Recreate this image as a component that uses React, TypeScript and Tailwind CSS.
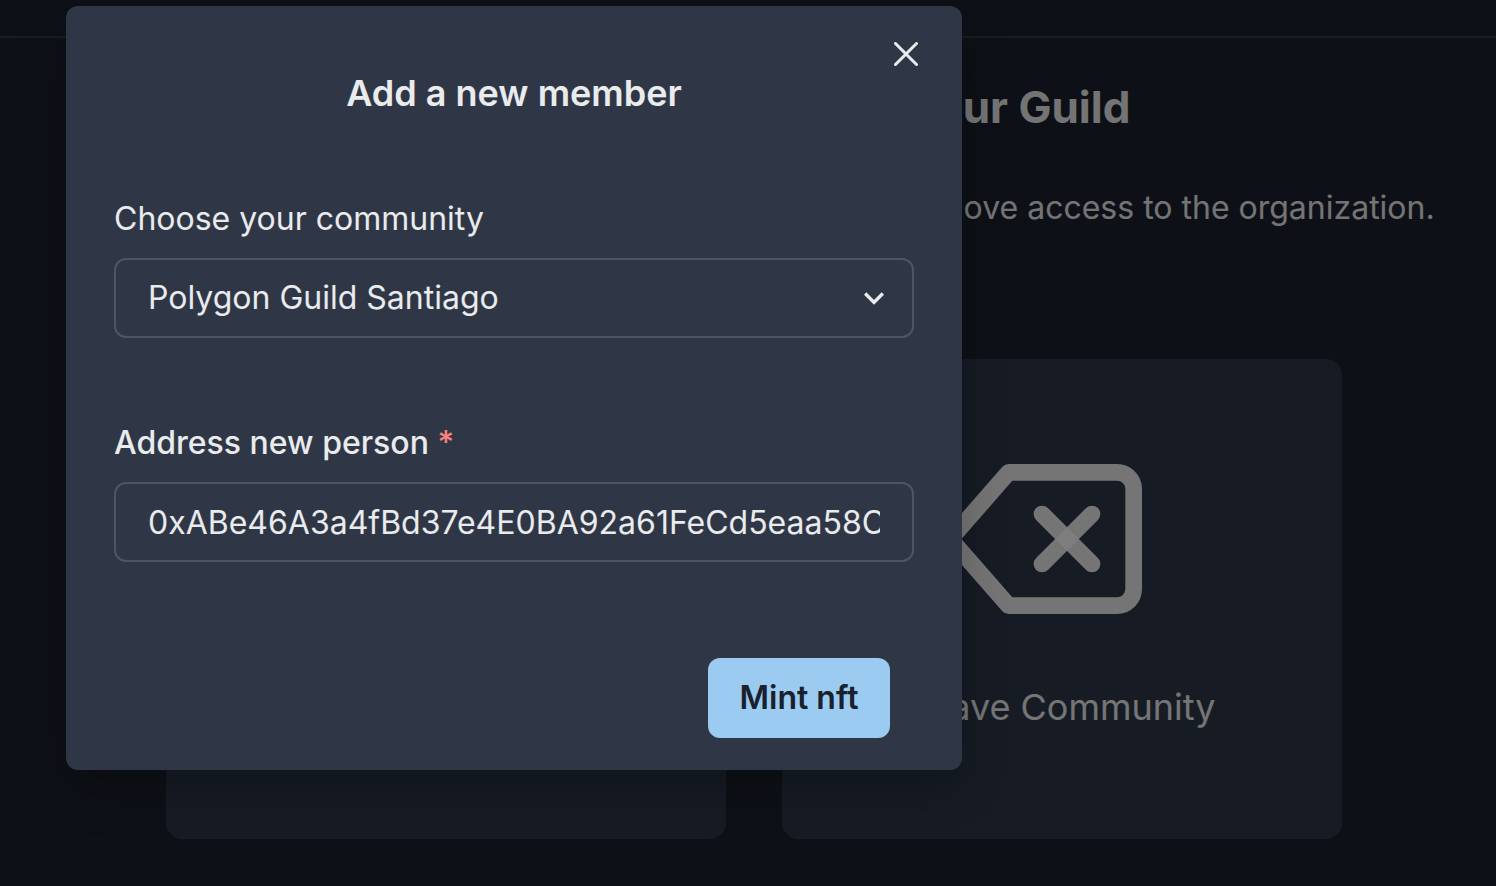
import React from 'react'
import { FiDelete, FiUserPlus } from 'react-icons/fi'

const CloseIcon = () => (
  <svg viewBox="0 0 24 24" className="h-6 w-6" fill="currentColor">
    <path d="M.439,21.44a1.5,1.5,0,0,0,2.122,2.121L11.823,14.3a.25.25,0,0,1,.354,0l9.262,9.263a1.5,1.5,0,1,0,2.122-2.121L14.3,12.177a.25.25,0,0,1,0-.354l9.263-9.262A1.5,1.5,0,0,0,21.439.44L12.177,9.7a.25.25,0,0,1-.354,0L2.561.44A1.5,1.5,0,0,0,.439,2.561L9.7,11.823a.25.25,0,0,1,0,.354Z" />
  </svg>
)

const ChevronIcon = () => (
  <svg viewBox="0 0 24 24" className="h-10 w-10" fill="currentColor">
    <path d="M16.59 8.59L12 13.17 7.41 8.59 6 10l6 6 6-6z" />
  </svg>
)

const ActionCard = ({ icon, label }: { icon: React.ReactNode; label: string }) => (
  <div className="flex h-[480px] w-[560px] flex-col items-center rounded-2xl bg-[#2d3748] pt-20">
    {icon}
    <p className="mt-[38px] text-4xl leading-[60px]">{label}</p>
  </div>
)

const Background = () => (
  <div className="flex h-full flex-col text-white/90">
    <div className="h-[38px] border-b-2 border-white/10" />
    <main className="flex flex-col items-center pl-[12px]">
      <h1 className="mt-[36px] whitespace-nowrap text-[44px] font-bold leading-[66px]">
        Manage the members of your Guild
      </h1>
      <p className="mt-[44px] whitespace-nowrap text-[32px] leading-[48px]">
        Here you can add new members to your community or remove access to the organization.
      </p>
      <div className="mt-[127px] flex gap-14">
        <ActionCard icon={<FiUserPlus size={200} />} label="Add Member" />
        <ActionCard icon={<FiDelete size={200} className="mr-10" />} label="Leave Community" />
      </div>
    </main>
  </div>
)

export default function App() {
  return (
    <div className="relative h-[886px] w-[1496px] overflow-hidden bg-[#1a202c] font-['Inter',sans-serif]">
      <Background />
      <div className="absolute inset-0 bg-black/50" />

      {/* modal */}
      <div className="absolute left-[66px] top-[6px] h-[764px] w-[896px] rounded-xl bg-[#2f3747] px-12 text-white/90 shadow-[0_20px_50px_-5px_rgba(0,0,0,0.25)]">
        <button className="absolute right-[44px] top-[36px] text-white/90">
          <CloseIcon />
        </button>

        <h2 className="pt-[60px] text-center text-4xl font-semibold leading-[54px]">Add a new member</h2>

        <label className="mt-[75px] block text-[32px] leading-[48px]">Choose your community</label>
        <div className="relative mt-[15px]">
          <select
            defaultValue="santiago"
            className="h-20 w-full appearance-none rounded-xl border-2 border-white/15 bg-transparent pl-8 pr-16 text-[32px] text-white/90 outline-none"
          >
            <option value="santiago">Polygon Guild Santiago</option>
          </select>
          <span className="pointer-events-none absolute right-5 top-5">
            <ChevronIcon />
          </span>
        </div>

        <label className="mt-[81px] block text-[32px] font-medium leading-[48px]">
          Address new person <span className="text-[#fc8181]">*</span>
        </label>
        <input
          defaultValue="0xABe46A3a4fBd37e4E0BA92a61FeCd5eaa58C8"
          className="mt-[15px] h-20 w-full rounded-xl border-2 border-white/15 bg-transparent px-8 text-[32px] text-white/90 outline-none"
        />

        <div className="mt-24 flex justify-end pr-6">
          <button className="h-20 w-[182px] rounded-xl bg-[#9bcbf0] text-[32px] font-semibold text-[#1a202c]">
            Mint nft
          </button>
        </div>
      </div>
    </div>
  )
}
